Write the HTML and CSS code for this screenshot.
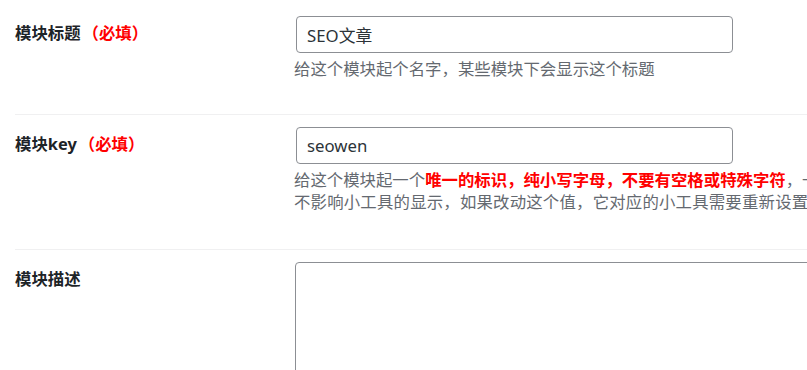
FILE: index.html
```html
<!DOCTYPE html>
<html lang="zh-CN">
<head>
<meta charset="utf-8">
<title>模块设置</title>
<link rel="stylesheet" href="styles.css">
</head>
<body>
<div class="form">
  <div class="field">
    <div class="label">模块标题<span class="req">（必填）</span></div>
    <div class="control">
      <input class="text" type="text" value="SEO文章">
      <p class="desc">给这个模块起个名字，某些模块下会显示这个标题</p>
    </div>
  </div>
  <div class="field">
    <div class="label">模块key<span class="req">（必填）</span></div>
    <div class="control">
      <input class="text" type="text" value="seowen">
      <p class="desc">给这个模块起一个<strong class="warn">唯一的标识，纯小写字母，不要有空格或特殊字符</strong>，一旦设置好后请勿随意修改，修改后<br><span class="wide">不影响小工具的显示，如果改动这个值，它对应的小工具需要重新设置</span></p>
    </div>
  </div>
  <div class="field">
    <div class="label">模块描述</div>
    <div class="control">
      <textarea class="area"></textarea>
    </div>
  </div>
</div>
</body>
</html>
```

FILE: styles.css
```css
html, body {
  margin: 0;
  overflow: hidden;
  background: #fff;
}
body {
  font-family: "Segoe UI", "Noto Sans", "Noto Sans CJK SC", sans-serif;
  font-size: 16.4px;
  color: #1d2327;
}
.field {
  display: grid;
  grid-template-columns: 281px minmax(0, 1fr);
  margin-left: 15px;
  padding: 12px 0 36px;
  border-bottom: 1px solid #f0f0f1;
}
.field:first-child {
  padding: 16px 0 34px;
}
.label {
  font-weight: 700;
  line-height: 22px;
  padding-top: 6px;
  white-space: nowrap;
}
.req, .warn {
  color: #ff0000;
  font-weight: 700;
}
.req {
  margin-left: 2px;
}
.text {
  display: block;
  box-sizing: border-box;
  width: 437px;
  height: 37px;
  margin: 0;
  padding: 0 10px;
  border: 1px solid #8c8f94;
  border-radius: 4px;
  font-family: "Segoe UI", "Noto Sans", "Noto Sans CJK SC", sans-serif;
  font-size: 16.8px;
  color: #2c3338;
  background: #fff;
}
.desc {
  margin: 5px 0 0 -2px;
  line-height: 22px;
  color: #646970;
  white-space: nowrap;
}
.wide {
  letter-spacing: 0.2px;
}
.area {
  display: block;
  box-sizing: border-box;
  width: 700px;
  height: 160px;
  margin: 0 0 0 -1px;
  border: 1px solid #8c8f94;
  border-radius: 4px;
  resize: none;
  background: #fff;
}
```
